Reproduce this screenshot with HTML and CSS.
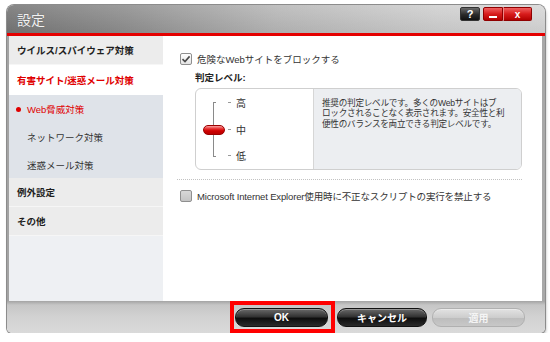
FILE: index.html
```html
<!DOCTYPE html>
<html lang="ja">
<head>
    <meta charset="UTF-8">
    <title>設定</title>
    <link rel="stylesheet" href="styles.css">
</head>
<body>
    <div class="window">
        <div class="titlebar">
            <span class="title">設定</span>
            <div class="title-buttons">
                <span class="tb-btn tb-help">?</span>
                <span class="tb-group">
                    <span class="tb-btn tb-min"><i></i></span>
                    <span class="tb-btn tb-close">x</span>
                </span>
            </div>
        </div>
        <div class="redline"></div>

        <div class="body">
            <nav class="sidebar">
                <div class="nav-item">ウイルス/スパイウェア対策</div>
                <div class="nav-item active">有害サイト/迷惑メール対策</div>
                <div class="subnav">
                    <div class="sub-item current"><span class="dot"></span>Web脅威対策</div>
                    <div class="sub-item">ネットワーク対策</div>
                    <div class="sub-item">迷惑メール対策</div>
                </div>
                <div class="nav-item">例外設定</div>
                <div class="nav-item">その他</div>
                <div class="nav-rest"></div>
            </nav>

            <main class="content">
                <label class="check-row first">
                    <span class="checkbox checked">
                        <svg width="10" height="10" viewBox="0 0 10 10"><path d="M1.5 5.2 L4 7.6 L8.6 2.4" fill="none" stroke="#4a4a4a" stroke-width="1.6"/></svg>
                    </span>
                    危険なWebサイトをブロックする
                </label>

                <div class="level-label">判定レベル:</div>

                <div class="level-box">
                    <div class="level-slider">
                        <div class="track">
                            <span class="thumb"></span>
                        </div>
                        <div class="marks">
                            <div class="mark"><span class="tick"></span>高</div>
                            <div class="mark"><span class="tick"></span>中</div>
                            <div class="mark"><span class="tick"></span>低</div>
                        </div>
                    </div>
                    <div class="level-desc">
                        推奨の判定レベルです。多くのWebサイトはブ<br>
                        ロックされることなく表示されます。安全性と利<br>
                        便性のバランスを両立できる判定レベルです。
                    </div>
                </div>

                <div class="separator"></div>

                <label class="check-row second">
                    <span class="checkbox"></span>
                    Microsoft Internet Explorer使用時に不正なスクリプトの実行を禁止する
                </label>
            </main>
        </div>

        <div class="footer">
            <span class="ok-frame"><button class="btn">OK</button></span>
            <button class="btn btn-cancel">キャンセル</button>
            <button class="btn btn-disabled">適用</button>
        </div>
    </div>
</body>
</html>
```

FILE: styles.css
```css
body {
    margin: 0;
    background-color: #ffffff;
    font-family: "Liberation Sans", "Noto Sans CJK JP", sans-serif;
    color: #333;
}

.window {
    margin: 5px 0 0 7px;
    width: 538px;
    height: 328px;
    display: flex;
    flex-direction: column;
    border-radius: 7px 7px 5px 5px;
    box-shadow: 0 0 0 1px #8c8c8c, 1px 2px 3px rgba(0,0,0,0.3);
}

/* title bar */
.titlebar {
    height: 28px;
    display: flex;
    justify-content: space-between;
    align-items: center;
    padding: 0 13px 0 10px;
    border-radius: 7px 7px 0 0;
    background: linear-gradient(180deg, rgba(255,255,255,0.12), rgba(0,0,0,0.06)),
                linear-gradient(100deg, #767676 0%, #8f8f8f 22%, #b8b8b8 50%, #d0d0d0 80%, #d8d8d8 100%);
}

.title {
    font-size: 14px;
    color: #f2f2f2;
    text-shadow: 0 0 1px rgba(0,0,0,0.3);
}

.title-buttons {
    align-self: flex-start;
    margin-top: 2px;
    display: flex;
    gap: 3px;
}

.tb-group {
    display: flex;
}

.tb-btn {
    height: 14px;
    width: 20px;
    box-sizing: border-box;
    display: flex;
    align-items: center;
    justify-content: center;
    color: #fff;
    font-weight: bold;
    font-size: 11px;
    border-radius: 2px;
}

.tb-help {
    background: linear-gradient(#6a6a6a, #2a2a2a 55%, #111);
    border: 1px solid #333;
}

.tb-min,
.tb-close {
    background: linear-gradient(#f06060, #d81c1c 50%, #b20000);
    border: 1px solid #8f0000;
}

.tb-min {
    border-radius: 2px 0 0 2px;
}

.tb-min i {
    width: 8px;
    height: 2px;
    margin-top: 6px;
    background: #fff;
}

.tb-close {
    width: 29px;
    border-left: 1px solid #e88;
    border-radius: 0 2px 2px 0;
    font-size: 10px;
}

.redline {
    height: 3px;
    background-color: #e40000;
}

/* main body */
.body {
    height: 265px;
    display: flex;
    border-left: 2px solid #a3a3a3;
    border-right: 3px solid #a8a8a8;
}

.sidebar {
    width: 154px;
    display: flex;
    flex-direction: column;
    background-color: #eef0f3;
}

.nav-item {
    height: 29px;
    box-sizing: border-box;
    display: flex;
    align-items: center;
    padding-left: 8px;
    font-size: 9.5px;
    font-weight: bold;
    color: #1e1e1e;
    background-color: #ececec;
    border-bottom: 1px solid #f6f6f6;
}

.nav-item.active {
    height: 30px;
    background-color: #ffffff;
    color: #e00000;
    border-bottom: none;
}

.subnav {
    background-color: #dfe3e9;
}

.sub-item {
    height: 28px;
    display: flex;
    align-items: center;
    padding-left: 18px;
    font-size: 9.5px;
    color: #333;
}

.sub-item:last-child {
    height: 27px;
}

.sub-item.current {
    color: #e00000;
}

.dot {
    width: 5px;
    height: 5px;
    border-radius: 50%;
    background-color: #e00000;
    margin-left: -11px;
    margin-right: 6px;
}

.nav-rest {
    flex: 1;
    background-color: #eef0f3;
}

.content {
    flex: 1;
    background-color: #ffffff;
}

.check-row {
    height: 16px;
    display: flex;
    align-items: center;
    gap: 5px;
    padding-left: 17px;
    font-size: 9.5px;
    white-space: nowrap;
}

.check-row.first {
    margin-top: 15px;
}

.check-row.second {
    margin-top: 8px;
    letter-spacing: -0.15px;
}

.checkbox {
    width: 12px;
    height: 12px;
    box-sizing: border-box;
    border: 1px solid #8f8f8f;
    border-radius: 2px;
    display: flex;
    align-items: center;
    justify-content: center;
    background: linear-gradient(#d8d8d8, #c4c4c4);
}

.checkbox.checked {
    background: linear-gradient(#ffffff, #e4e4e4);
}

.level-label {
    margin-top: 3px;
    height: 15px;
    line-height: 15px;
    padding-left: 32px;
    font-size: 9.5px;
    font-weight: bold;
    color: #222;
}

.level-box {
    margin: 3px 0 0 32px;
    width: 327px;
    height: 82px;
    box-sizing: border-box;
    display: flex;
    border: 1px solid #cfcfcf;
    border-radius: 6px;
    overflow: hidden;
}

.level-slider {
    width: 117px;
    display: flex;
    align-items: center;
    padding-left: 17px;
    box-sizing: border-box;
}

.track {
    position: relative;
    width: 3px;
    height: 55px;
    box-sizing: border-box;
    border: 1px solid #8a8a8a;
    border-right: none;
}

.thumb {
    position: absolute;
    left: -11px;
    top: 22px;
    width: 22px;
    height: 10px;
    box-sizing: border-box;
    border-radius: 5px;
    border: 1px solid #9a0000;
    background: linear-gradient(#f8a0a0, #e83030 35%, #d00000 60%, #b80000);
}

.marks {
    height: 66px;
    margin-left: 12px;
    display: flex;
    flex-direction: column;
    justify-content: space-between;
}

.mark {
    height: 13px;
    display: flex;
    align-items: center;
    gap: 5px;
    font-size: 10px;
    color: #333;
}

.tick {
    width: 3px;
    height: 1px;
    background-color: #999;
}

.level-desc {
    flex: 1;
    background-color: #eceef1;
    border-left: 1px solid #d6d6d6;
    padding: 9px 0 0 8px;
    font-size: 8.6px;
    letter-spacing: -0.25px;
    line-height: 10.3px;
    color: #333;
    white-space: nowrap;
}

.separator {
    margin: 9px 0 0 14px;
    width: 345px;
    border-top: 1px dotted #c2c2c2;
}

/* footer */
.footer {
    height: 32px;
    display: flex;
    justify-content: flex-end;
    align-items: center;
    padding-right: 20px;
    border-radius: 0 0 5px 5px;
    background: linear-gradient(#a4a4a4 0px, #c6c6c6 4px, #d2d2d2 50%, #dadada 100%);
}

.ok-frame {
    align-self: stretch;
    display: flex;
    align-items: center;
    border: 4px solid #ff0000;
    padding: 0 3px 0 1px;
    margin-right: 2px;
}

.btn {
    width: 93px;
    height: 19px;
    padding: 0;
    border: 1px solid #111;
    border-radius: 9px;
    background: linear-gradient(#6a6a6a, #333 45%, #0e0e0e 55%, #2a2a2a);
    box-shadow: inset 0 1px 0 rgba(255,255,255,0.3);
    color: #ffffff;
    font-family: "Liberation Sans", "Noto Sans CJK JP", sans-serif;
    font-size: 10px;
    font-weight: bold;
}

.btn-cancel {
    width: 90px;
    margin-right: 5px;
}

.btn-disabled {
    border-color: #b0b0b0;
    background: linear-gradient(#e2e2e2, #cdcdcd 50%, #bdbdbd 55%, #c8c8c8);
    color: #f4f4f4;
}
```
